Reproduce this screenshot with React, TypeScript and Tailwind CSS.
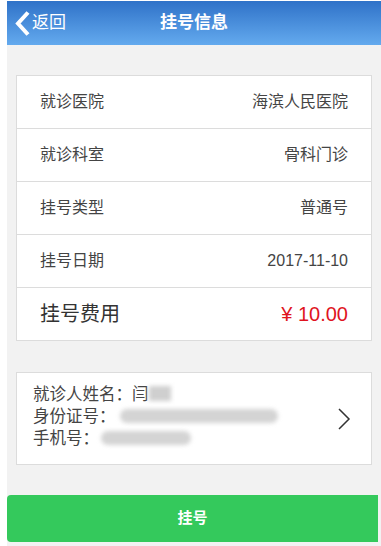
const rows = [
  { label: "就诊医院", value: "海滨人民医院" },
  { label: "就诊科室", value: "骨科门诊" },
  { label: "挂号类型", value: "普通号" },
  { label: "挂号日期", value: "2017-11-10" },
]

export default function App() {
  return (
    <div
      className="w-[381px] h-[546px] bg-white pl-[7px] flex flex-col overflow-hidden"
      style={{ fontFamily: '"Liberation Sans", "Noto Sans CJK SC", sans-serif' }}
    >
      <header className="h-[44px] mt-[1px] bg-gradient-to-b from-[#2f72c8] to-[#64aaee] relative flex items-center justify-center shrink-0">
        <div className="absolute left-[7px] top-0 h-full flex items-center text-white">
          <svg width="17" height="27" viewBox="0 0 17 27" className="mr-[1px]">
            <path d="M14 2.5 L4 13.5 L14 24.5" fill="none" stroke="white" strokeWidth="4" />
          </svg>
          <span className="text-[17px]">返回</span>
        </div>
        <h1 className="text-white text-[17px] font-bold">挂号信息</h1>
      </header>

      <main className="flex-1 bg-[#f2f2f2] pt-[30px] flex flex-col">
        <section className="mx-[9px] bg-white border border-[#dcdcdc]">
          {rows.map((r) => (
            <div
              key={r.label}
              className="h-[53px] flex items-center justify-between px-[23px] border-b border-[#dcdcdc] text-[16px] text-[#444]"
            >
              <span>{r.label}</span>
              <span>{r.value}</span>
            </div>
          ))}
          <div className="h-[52px] flex items-center justify-between px-[23px] text-[20px]">
            <span className="text-[#333]">挂号费用</span>
            <span className="text-[#e0141e]">¥ 10.00</span>
          </div>
        </section>

        <section className="mx-[9px] mt-[31px] h-[93px] bg-white border border-[#dcdcdc] flex items-center justify-between pl-[16px] pr-[20px]">
          <div className="text-[16.5px] leading-[22px] text-[#444] pb-[6px]">
            <div className="flex items-center">
              就诊人姓名：闫
              <span className="inline-block w-[22px] h-[15px] bg-[#cfcfcf] blur-[2px]" />
            </div>
            <div className="flex items-center">
              身份证号：
              <span className="inline-block ml-[4px] w-[158px] h-[14px] rounded-full bg-[#d4d4d4] blur-[2px]" />
            </div>
            <div className="flex items-center">
              手机号：
              <span className="inline-block ml-[2px] w-[90px] h-[14px] rounded-full bg-[#d4d4d4] blur-[2px]" />
            </div>
          </div>
          <svg width="14" height="22" viewBox="0 0 14 22">
            <path d="M2 1 L12 11 L2 21" fill="none" stroke="#333" strokeWidth="1.5" />
          </svg>
        </section>

        <button className="mt-[30px] mr-[3px] h-[47px] rounded-l-[4px] bg-[#34c95c] text-white text-[15px] font-bold">
          挂号
        </button>
      </main>
    </div>
  )
}
